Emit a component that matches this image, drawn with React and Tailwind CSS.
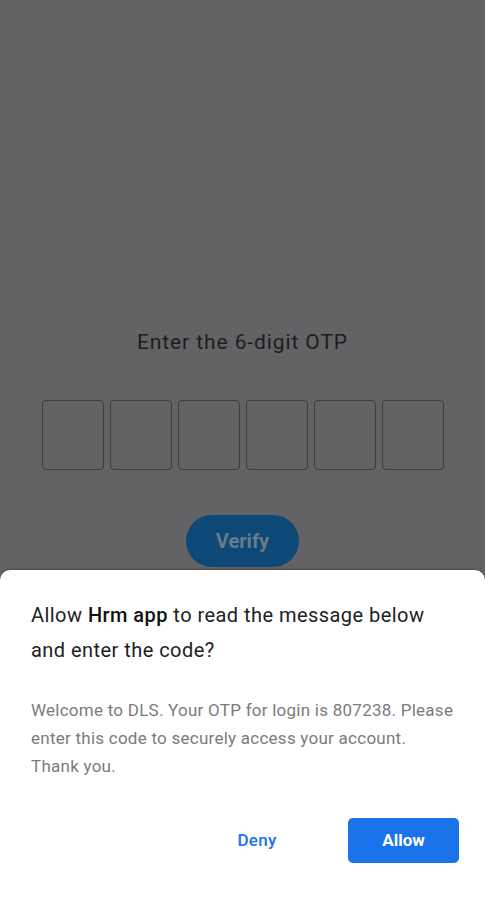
import { useState } from "react";

const App = () => {
    const [otp] = useState(["", "", "", "", "", ""]);

    return (
        <div className="h-[900px] w-full flex flex-col bg-[#636265] overflow-hidden" style={{ fontFamily: "Roboto, 'Liberation Sans', sans-serif" }}>
            <div className="flex-1 flex flex-col items-center pt-[328px]">
                <h1 className="text-[21px] leading-[28px] text-[#1d1d1f] tracking-[0.9px]">Enter the 6-digit OTP</h1>
                <div className="mt-[44px] flex gap-[6px]">
                    {otp.map((v, i) => (
                        <div key={i} className="w-[62px] h-[70px] rounded-[4px] border-[1.5px] border-[#3e3d40]">
                            {v}
                        </div>
                    ))}
                </div>
                <button className="mt-[45px] w-[113px] h-[52px] rounded-full bg-[#0d4876] text-[#687a8c] text-[20px] font-bold">
                    Verify
                </button>
            </div>

            <div className="h-[330px] bg-white rounded-t-[10px] px-[31px] pt-[28px] shadow-[0_-1px_2px_rgba(0,0,0,0.25)]">
                <p className="text-[20px] leading-[35px] text-[#202124] tracking-[0.45px] whitespace-nowrap">
                    Allow <b className="font-medium text-[#111]">Hrm app</b> to read the message below
                    <br />
                    and enter the code?
                </p>
                <p className="mt-[28px] text-[17px] leading-[28px] text-[#7b7b7b] tracking-[0.25px] whitespace-nowrap">
                    Welcome to DLS. Your OTP for login is 807238. Please
                    <br />
                    enter this code to securely access your account.
                    <br />
                    Thank you.
                </p>
                <div className="mt-[38px] flex justify-end items-center gap-[46px] -mr-[5px]">
                    <button className="w-[90px] h-[45px] text-[17px] font-medium text-[#1a73e8] tracking-[0.3px]">Deny</button>
                    <button className="w-[111px] h-[45px] rounded-[5px] bg-[#1a73e8] text-white text-[17px] font-bold">Allow</button>
                </div>
            </div>
        </div>
    );
};

export default App;
